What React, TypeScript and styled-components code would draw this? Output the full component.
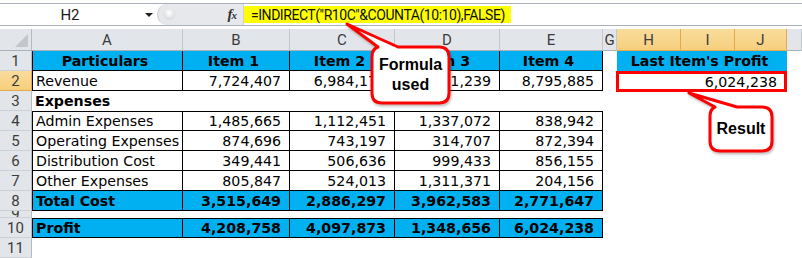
import React from 'react';
import styled, { createGlobalStyle, css } from 'styled-components';

const GlobalStyle = createGlobalStyle`
  html, body { margin: 0; padding: 0; background: #fff; }
  body { width: 802px; height: 258px; overflow: hidden; }
`;

const uiFont = `Roboto, "Liberation Sans", Arial, sans-serif`;
const cellFont = `"DejaVu Sans", Verdana, sans-serif`;
const BLUE = '#00b0f0';

const Page = styled.div`
  position: relative;
  width: 802px;
  height: 258px;
  overflow: hidden;
  background: #fff;
`;

/* ---------- formula bar ---------- */

const FormulaBar = styled.div`
  display: flex;
  height: 21px;
  margin: 3px 0 3px;
  border-top: 1px solid #aab0b8;
  border-bottom: 1px solid #aab0b8;
`;

const NameBox = styled.div`
  display: flex;
  width: 157px;
  background: #fff;
`;

const NameText = styled.div`
  width: 140px;
  display: flex;
  align-items: center;
  justify-content: center;
  font: 15px ${uiFont};
  color: #1a1a1a;
`;

const DropArrow = styled.div`
  width: 17px;
  display: flex;
  align-items: center;
  justify-content: center;
  &::after {
    content: '';
    border-left: 4px solid transparent;
    border-right: 4px solid transparent;
    border-top: 4px solid #222;
    margin-top: 1px;
  }
`;

const Tools = styled.div`
  position: relative;
  display: flex;
  align-items: center;
  justify-content: flex-end;
  width: 86px;
  padding-right: 7px;
  box-sizing: border-box;
  background: #e6e8eb;
  border-left: 1px solid #c5cad0;
  border-top-left-radius: 11px;
  border-bottom-left-radius: 11px;
`;

const Knob = styled.div`
  position: absolute;
  left: 5px;
  top: 4px;
  width: 12px;
  height: 12px;
  border-radius: 50%;
  background: radial-gradient(circle at 50% 40%, #ffffff 0%, #e2e4e7 55%, #c4c8cd 100%);
`;

const Fx = styled.span`
  font: italic bold 15px "Liberation Serif", "DejaVu Serif", serif;
  color: #333;
  letter-spacing: -1px;
  sub {
    font-size: 11px;
    vertical-align: baseline;
  }
`;

const FormulaInput = styled.div`
  flex: 1;
  display: flex;
  align-items: center;
  background: #fff;
  border-left: 1px solid #d0d4d9;
`;

const Highlight = styled.span`
  display: flex;
  align-items: center;
  height: 17px;
  padding: 0 6px 0 7px;
  background: #ffff00;
  font: 14px ${uiFont};
  letter-spacing: -0.45px;
  color: #111;
  white-space: nowrap;
`;

/* ---------- sheet ---------- */

const Sheet = styled.div`
  display: grid;
  grid-template-columns: 32px 151px 107px 105px 105px 103px 14px 64px 54px 52px 1fr;
  grid-template-rows: 22px repeat(8, 20px) 7px 20px 20px;
`;

const Corner = styled.div`
  position: relative;
  background: #e2e5e9;
  border-right: 1px solid #b4bac1;
  border-bottom: 1px solid #a9b0b8;
  &::after {
    content: '';
    position: absolute;
    right: 3px;
    bottom: 3px;
    border-left: 13px solid transparent;
    border-bottom: 13px solid #c3c7cc;
  }
`;

const ColHead = styled.div<{ $sel?: boolean }>`
  display: flex;
  align-items: center;
  justify-content: center;
  font: 15px ${uiFont};
  color: #3c3c3c;
  background: ${p => (p.$sel ? 'linear-gradient(#f9dc9c, #f6cf7c)' : '#e2e5e9')};
  border-right: 1px solid ${p => (p.$sel ? '#e3a850' : '#c3c8ce')};
  border-bottom: 1px solid ${p => (p.$sel ? '#e3a850' : '#a9b0b8')};
  overflow: hidden;
`;

const RowHead = styled.div<{ $sel?: boolean }>`
  grid-column: 1;
  display: flex;
  align-items: center;
  justify-content: center;
  font: 15px ${uiFont};
  color: #3c3c3c;
  overflow: hidden;
  background: ${p => (p.$sel ? 'linear-gradient(#f9dc9c, #f6cf7c)' : '#e2e5e9')};
  border-right: 1px solid ${p => (p.$sel ? '#e3a850' : '#b4bac1')};
  border-bottom: 1px solid ${p => (p.$sel ? '#e3a850' : '#cdd1d6')};
`;

type Align = 'left' | 'center' | 'right';

const Cell = styled.div<{
  $col: number;
  $span?: number;
  $align?: Align;
  $bold?: boolean;
  $fill?: boolean;
  $box?: boolean;
  $top?: boolean;
  $left?: boolean;
  $mark?: boolean;
}>`
  grid-column: ${p => p.$col} / span ${p => p.$span || 1};
  display: flex;
  align-items: center;
  justify-content: ${p =>
    p.$align === 'right' ? 'flex-end' : p.$align === 'center' ? 'center' : 'flex-start'};
  padding: 0 8px 0 3px;
  box-sizing: border-box;
  white-space: nowrap;
  overflow: visible;
  font-family: ${cellFont};
  font-size: 14.2px;
  font-weight: ${p => (p.$bold ? 'bold' : 'normal')};
  color: #000;
  background: ${p => (p.$fill ? BLUE : 'transparent')};
  ${p =>
    p.$box &&
    css`
      border-right: 1px solid #000;
      border-bottom: 1px solid #000;
    `}
  ${p => p.$top && css`border-top: 1px solid #000;`}
  ${p => p.$left && css`border-left: 1px solid #000;`}
  ${p =>
    p.$mark &&
    css`
      border: 3px solid #ff0000;
      padding-right: 7px;
      margin: 0 0 -1px -1px;
    `}
`;

/* ---------- callouts ---------- */

const Callout = styled.div<{ $x: number; $y: number; $w: number; $h: number }>`
  position: absolute;
  left: ${p => p.$x}px;
  top: ${p => p.$y}px;
  width: ${p => p.$w}px;
  height: ${p => p.$h}px;
  svg {
    position: absolute;
    inset: 0;
    overflow: visible;
    filter: drop-shadow(1px 2px 1px rgba(0, 0, 0, 0.25));
  }
`;

const CalloutText = styled.div<{ $x: number; $y: number; $w: number; $h: number }>`
  position: absolute;
  left: ${p => p.$x}px;
  top: ${p => p.$y}px;
  width: ${p => p.$w}px;
  height: ${p => p.$h}px;
  display: flex;
  align-items: center;
  justify-content: center;
  text-align: center;
  font: bold 16px "Liberation Sans", Arial, sans-serif;
  line-height: 20px;
  color: #000;
`;

interface CellSpec {
  col: number;
  span?: number;
  text?: string;
  align?: Align;
  bold?: boolean;
  fill?: boolean;
  box?: boolean;
  top?: boolean;
  left?: boolean;
  mark?: boolean;
}

const cols = ['A', 'B', 'C', 'D', 'E', 'G', 'H', 'I', 'J'];
const selectedCols = ['H', 'I', 'J'];

function dataRow(
  label: string,
  values: string[],
  opts: { bold?: boolean; fill?: boolean; top?: boolean } = {}
): CellSpec[] {
  const { bold, fill, top } = opts;
  return [
    { col: 2, text: label, bold, fill, box: true, top, left: true },
    ...values.map((v, i) => ({ col: 3 + i, text: v, align: 'right' as Align, bold, fill, box: true, top })),
  ];
}

const rows: { n: number; cells: CellSpec[] }[] = [
  {
    n: 1,
    cells: [
      { col: 2, text: 'Particulars', align: 'center', bold: true, fill: true, box: true, left: true },
      ...['Item 1', 'Item 2', 'Item 3', 'Item 4'].map((t, i) => ({
        col: 3 + i,
        text: t,
        align: 'center' as Align,
        bold: true,
        fill: true,
        box: true,
      })),
      { col: 8, span: 3, text: "Last Item's Profit", align: 'center', bold: true, fill: true },
    ],
  },
  {
    n: 2,
    cells: [
      ...dataRow('Revenue', ['7,724,407', '6,984,171', '5,361,239', '8,795,885']),
      { col: 8, span: 3, text: '6,024,238', align: 'right', box: true, mark: true },
    ],
  },
  { n: 3, cells: [{ col: 2, span: 5, text: 'Expenses', bold: true }] },
  { n: 4, cells: dataRow('Admin Expenses', ['1,485,665', '1,112,451', '1,337,072', '838,942'], { top: true }) },
  { n: 5, cells: dataRow('Operating Expenses', ['874,696', '743,197', '314,707', '872,394']) },
  { n: 6, cells: dataRow('Distribution Cost', ['349,441', '506,636', '999,433', '856,155']) },
  { n: 7, cells: dataRow('Other Expenses', ['805,847', '524,013', '1,311,371', '204,156']) },
  {
    n: 8,
    cells: dataRow('Total Cost', ['3,515,649', '2,886,297', '3,962,583', '2,771,647'], { bold: true, fill: true }),
  },
  { n: 9, cells: [] },
  {
    n: 10,
    cells: dataRow('Profit', ['4,208,758', '4,097,873', '1,348,656', '6,024,238'], {
      bold: true,
      fill: true,
      top: true,
    }),
  },
  { n: 11, cells: [] },
];

export default function App() {
  return (
    <Page>
      <GlobalStyle />
      <FormulaBar>
        <NameBox>
          <NameText>H2</NameText>
          <DropArrow />
        </NameBox>
        <Tools>
          <Knob />
          <Fx>
            f<sub>x</sub>
          </Fx>
        </Tools>
        <FormulaInput>
          <Highlight>=INDIRECT("R10C"&amp;COUNTA(10:10),FALSE)</Highlight>
        </FormulaInput>
      </FormulaBar>

      <Sheet>
        <Corner />
        {cols.map(c => (
          <ColHead key={c} $sel={selectedCols.includes(c)}>
            {c}
          </ColHead>
        ))}
        <ColHead />
        {rows.map(row => (
          <React.Fragment key={row.n}>
            <RowHead style={{ gridRow: row.n + 1 }} $sel={row.n === 2}>
              {row.n}
            </RowHead>
            {row.cells.map((c, i) => (
              <Cell
                key={i}
                style={{ gridRow: row.n + 1 }}
                $col={c.col}
                $span={c.span}
                $align={c.align}
                $bold={c.bold}
                $fill={c.fill}
                $box={c.box}
                $top={c.top}
                $left={c.left}
                $mark={c.mark}
              >
                {c.text}
              </Cell>
            ))}
          </React.Fragment>
        ))}
      </Sheet>

      <Callout $x={340} $y={10} $w={115} $h={100}>
        <svg width="115" height="100" viewBox="0 0 115 100">
          <path
            d="M 7 14 L 58 37 H 99 Q 109 37 109 47 V 83 Q 109 93 99 93 H 42 Q 32 93 32 83 V 47 Q 32 39 38 37 Z"
            fill="#fff"
            stroke="#ff0000"
            strokeWidth="3"
            strokeLinejoin="round"
          />
        </svg>
        <CalloutText $x={32} $y={37} $w={77} $h={56}>
          Formula
          <br />
          used
        </CalloutText>
      </Callout>

      <Callout $x={680} $y={85} $w={100} $h={72}>
        <svg width="100" height="72" viewBox="0 0 100 72">
          <path
            d="M 9 8 L 57 22 H 82 Q 92 22 92 32 V 56 Q 92 66 82 66 H 40 Q 30 66 30 56 V 32 Q 30 24 35 22 Z"
            fill="#fff"
            stroke="#ff0000"
            strokeWidth="3"
            strokeLinejoin="round"
          />
        </svg>
        <CalloutText $x={30} $y={22} $w={62} $h={44}>
          Result
        </CalloutText>
      </Callout>
    </Page>
  );
}
